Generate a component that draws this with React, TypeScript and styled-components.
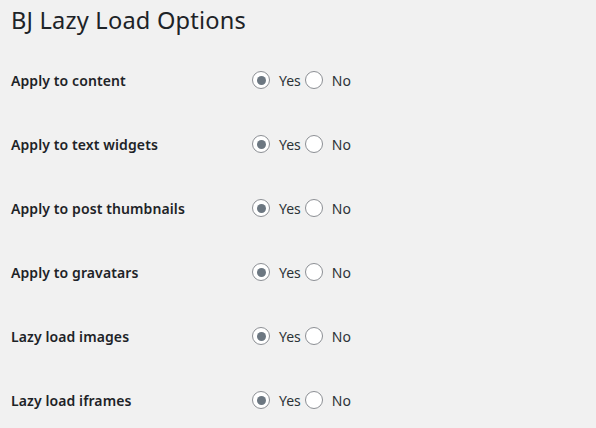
import React from "react";
import styled, { createGlobalStyle } from "styled-components";

const options = [
	"Apply to content",
	"Apply to text widgets",
	"Apply to post thumbnails",
	"Apply to gravatars",
	"Lazy load images",
	"Lazy load iframes",
];

const App = () => {
	return (
		<Page>
			<GlobalStyle />
			<Title>BJ Lazy Load Options</Title>
			<Table>
				{options.map((label) => (
					<Row key={label}>
						<Label>{label}</Label>
						<Choices>
							<Choice>
								<Radio checked />
								<span>Yes</span>
							</Choice>
							<Choice>
								<Radio />
								<span>No</span>
							</Choice>
						</Choices>
					</Row>
				))}
			</Table>
		</Page>
	);
};

export default App;

const GlobalStyle = createGlobalStyle`
	html, body {
		margin: 0;
		padding: 0;
		background: #f1f1f1;
	}
	body {
		font-family: "Noto Sans", "Open Sans", sans-serif;
		color: #1d2327;
	}
`;

const Page = styled.div`
	width: 596px;
	height: 428px;
	overflow: hidden;
	padding: 0 0 0 11px;
	box-sizing: border-box;
	background: #f1f1f1;
`;

const Title = styled.h1`
	margin: 0;
	height: 48px;
	display: flex;
	align-items: center;
	padding-bottom: 8px;
	box-sizing: border-box;
	font-size: 23.6px;
	font-weight: 400;
	color: #1d2327;
	letter-spacing: 0.2px;
`;

const Table = styled.div`
	display: flex;
	flex-direction: column;
`;

const Row = styled.div`
	height: 64px;
	display: grid;
	grid-template-columns: 241px 1fr;
	align-items: center;
`;

const Label = styled.div`
	font-size: 14px;
	font-weight: 600;
	color: #1d2327;
	letter-spacing: 0.1px;
`;

const Choices = styled.div`
	display: flex;
	align-items: center;
	gap: 4px;
`;

const Choice = styled.label`
	display: flex;
	align-items: center;
	font-size: 14px;
	color: #2c3338;
`;

const Radio = styled.span<{ checked?: boolean }>`
	width: 18px;
	height: 18px;
	box-sizing: border-box;
	border: 1px solid #8c8f94;
	border-radius: 50%;
	background: #fff;
	margin-right: 9px;
	display: flex;
	align-items: center;
	justify-content: center;
	&::after {
		content: "";
		width: 9px;
		height: 9px;
		border-radius: 50%;
		background: ${(p) => (p.checked ? "#6c7781" : "transparent")};
	}
`;
